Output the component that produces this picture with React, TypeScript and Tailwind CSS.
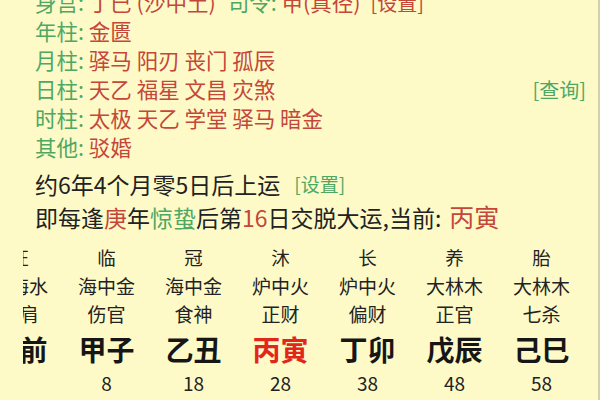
const GREEN = "text-[#4ea864]";
const RED = "text-[#c4473a]";

const pillars: { label: string; values: string[] }[] = [
  { label: "年柱", values: ["金匮"] },
  { label: "月柱", values: ["驿马", "阳刃", "丧门", "孤辰"] },
  { label: "日柱", values: ["天乙", "福星", "文昌", "灾煞"] },
  { label: "时柱", values: ["太极", "天乙", "学堂", "驿马", "暗金"] },
  { label: "其他", values: ["驳婚"] },
];

const dayun = [
  { stage: "旺", nayin: "大海水", god: "比肩", gz: "运前", age: "" },
  { stage: "临", nayin: "海中金", god: "伤官", gz: "甲子", age: "8" },
  { stage: "冠", nayin: "海中金", god: "食神", gz: "乙丑", age: "18" },
  { stage: "沐", nayin: "炉中火", god: "正财", gz: "丙寅", age: "28", current: true },
  { stage: "长", nayin: "炉中火", god: "偏财", gz: "丁卯", age: "38" },
  { stage: "养", nayin: "大林木", god: "正官", gz: "戊辰", age: "48" },
  { stage: "胎", nayin: "大林木", god: "七杀", gz: "己巳", age: "58" },
];

function PillarLine({ label, values, right }: { label: string; values: string[]; right?: string }) {
  return (
    <div className="flex h-[29px] items-center justify-between pr-[12px] text-[21.5px]">
      <div className="whitespace-pre">
        <span className={GREEN}>{label}: </span>
        <span className={RED}>{values.join(" ")}</span>
      </div>
      {right && <span className={`${GREEN} text-[20px]`}>[{right}]</span>}
    </div>
  );
}

export default function App() {
  return (
    <div
      className="relative h-[400px] w-[600px] overflow-hidden border-r-2 border-[#d3d1aa] bg-[#fdfac8]"
      style={{ fontFamily: '"Noto Sans CJK SC", "Noto Sans", sans-serif' }}
    >
      <div className="-mt-[12px] pl-[35px]">
        <div className="flex h-[29px] items-center whitespace-pre text-[21.5px]">
          <span className={GREEN}>身宫: </span>
          <span className={RED}>丁巳 (沙中土)</span>
          <span className={`${GREEN} ml-[12px]`}>司令: </span>
          <span className={RED}>甲(真径)</span>
          <span className={`${RED} ml-[10px] text-[20px]`}>[设置]</span>
        </div>
        {pillars.map((p) => (
          <PillarLine key={p.label} label={p.label} values={p.values} right={p.label === "日柱" ? "查询" : undefined} />
        ))}
        <div className="mt-[6px] flex h-[33px] items-center text-[23px] text-[#222]">
          约6年4个月零5日后上运
          <span className={`${GREEN} ml-[14px] text-[19px]`}>[设置]</span>
        </div>
        <div className="flex h-[32px] items-center whitespace-nowrap text-[23px] text-[#222]">
          即每逢<span className={RED}>庚</span>年<span className={GREEN}>惊蛰</span>后第
          <span className={RED}>16</span>日交脱大运,当前:
          <span className={`${RED} ml-[8px] text-[25px]`}>丙寅</span>
        </div>
      </div>

      {/* horizontally scrolled table: first column clipped at the left edge */}
      <div className="ml-[23px] mt-[11px] overflow-hidden">
        <div className="-ml-[47px] grid grid-cols-[repeat(7,87px)] text-center text-[#222]">
          {dayun.map((d) => (
            <div key={d.gz} className="flex flex-col items-center whitespace-nowrap">
              <div className="flex h-[28px] items-center text-[18.5px]">{d.stage}</div>
              <div className="flex h-[28px] items-center text-[19px]">{d.nayin}</div>
              <div className="flex h-[28px] items-center text-[19px]">{d.god}</div>
              <div
                className={`flex h-[42px] items-center text-[28px] font-bold ${d.current ? "text-[#e3261c]" : "text-[#161616]"}`}
              >
                {d.gz}
              </div>
              <div className="flex h-[26px] items-center text-[19px]">{d.age}</div>
            </div>
          ))}
        </div>
      </div>
    </div>
  );
}
